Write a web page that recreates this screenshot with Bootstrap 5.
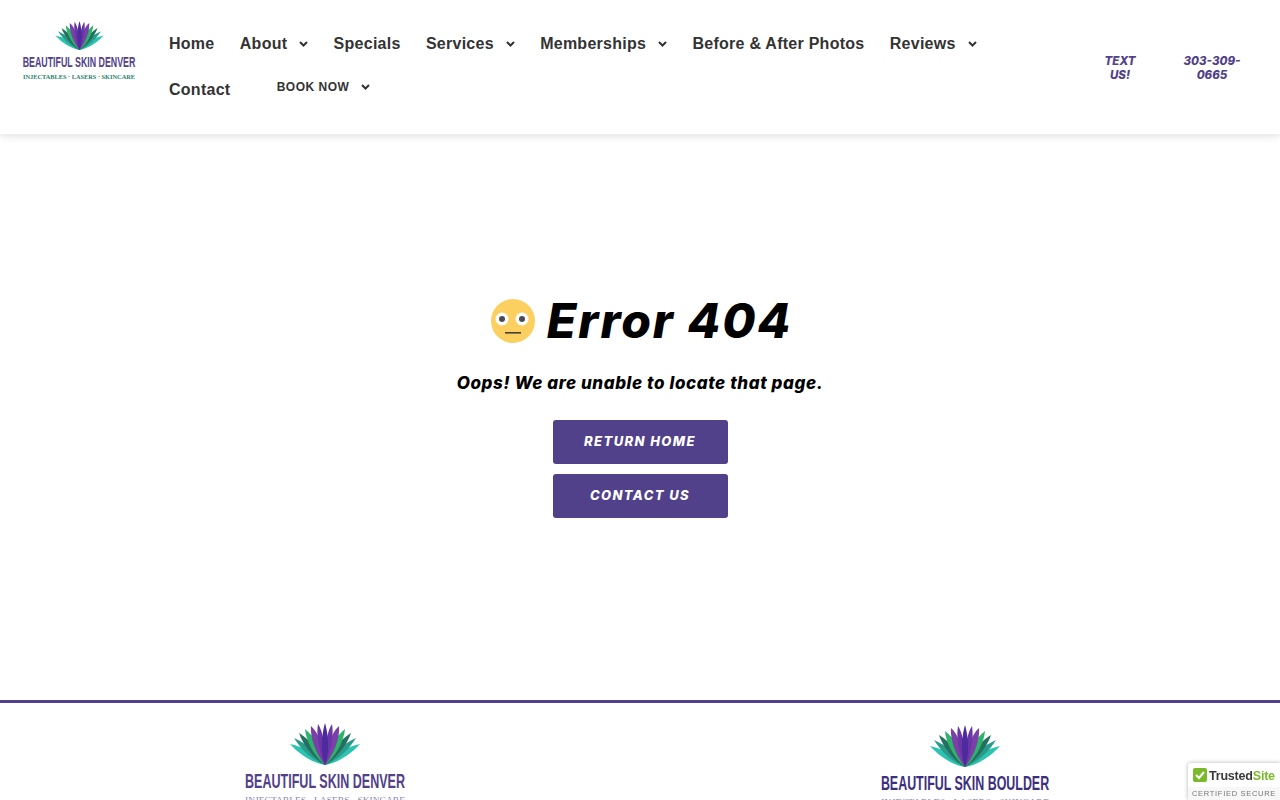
<!DOCTYPE html>
<html lang="en">
<head>
  <meta charset="UTF-8">
  <title>Page Not Found - Beautiful Skin Denver</title>
  <meta name="viewport" content="width=device-width, initial-scale=1">
  <link href="https://cdn.jsdelivr.net/npm/bootstrap@5.3.0/dist/css/bootstrap.min.css" rel="stylesheet">
  <style>
    body { font-family: "Liberation Sans", Arial, sans-serif; color: #000; background: #fff; }
    .site-head { height: 134px; padding: 0 0 0 22px; box-shadow: 0 2px 8px rgba(0,0,0,.13); position: relative; }
    .head-logo { width: 114px; height: 62px; margin-top: 20px; display: block; flex: none; }
    .menu-wrap { width: 830px; margin-left: 33px; padding-top: 21px; column-gap: 25.3px; }
    .menu-wrap a { font-size: 16px; font-weight: 700; color: #333; text-decoration: none; height: 46px; display: flex; align-items: center; letter-spacing: .26px; }
    .menu-wrap svg { margin-left: 12px; }
    .menu-wrap a.book-link { font-size: 12px; letter-spacing: .5px; margin-left: 21px; height: 40px; }
    .call-box { font-family: Inter, "Open Sans", sans-serif; font-style: italic; font-weight: 800; font-size: 11.5px; line-height: 14px; color: #51408a; text-align: center; text-decoration: none; }
    .call-row { position: absolute; top: 54px; left: 1095px; gap: 37px; }
    .call-text { width: 50px; }
    .call-phone { width: 60px; }
    .error-box { height: 566px; padding-top: 159px; }
    .error-title { font-family: Inter, "Open Sans", sans-serif; font-style: italic; font-weight: 800; font-size: 48px; line-height: 56px; margin: 0; padding-left: 3px; gap: 12px; letter-spacing: 1.9px; }
    .error-sub { font-family: Inter, "Open Sans", sans-serif; font-style: italic; font-weight: 800; font-size: 17px; line-height: 22px; margin: 23px 0 26px; letter-spacing: .6px; }
    .btn-purple { width: 175px; height: 44px; background: #51408a; color: #fff; border: 0; border-radius: 3px; font-family: Inter, "Open Sans", sans-serif; font-style: italic; font-weight: 800; font-size: 13px; letter-spacing: 1.4px; padding: 0; line-height: 43px; }
    .btn-purple:hover { background: #443475; color: #fff; }
    .btn-stack { gap: 10px; }
    .site-foot { border-top: 3px solid #51408a; height: 200px; overflow: hidden; }
    .foot-cell { padding-left: 10px; }
    .foot-logo { display: block; margin: 0 auto; }
    .trust-badge { position: fixed; right: 0; bottom: 0; width: 92px; height: 37px; background: #fff; box-shadow: 0 0 4px rgba(0,0,0,.3); border-radius: 3px 0 0 0; }
    .trust-top { height: 24px; padding: 5px 0 0 5px; gap: 2px; font-size: 12.5px; font-weight: 700; line-height: 15px; color: #3a3a3a; letter-spacing: -.2px; white-space: nowrap; }
    .trust-top > span { margin-top: 1px; }
    .trust-top span span { color: #7ab929; }
    .trust-bottom { height: 13px; background: #f7f7f7; font-size: 7.5px; line-height: 13px; letter-spacing: .7px; color: #777; text-align: center; white-space: nowrap; }
  </style>
</head>
<body>

<!-- Hoja del logo, se reutiliza en cabecera y pie -->
<svg width="0" height="0" class="position-absolute">
  <symbol id="agave" viewBox="0 0 70 42">
    <path fill="#2cc4b0" d="M35 42C22 40 9 31 0 21 14 24 28 31 35 42Z"/>
    <path fill="#2cc4b0" d="M35 42C48 40 61 31 70 21 56 24 42 31 35 42Z"/>
    <path fill="#2a9a8a" d="M35 42C24 38 11 27 4 15 17 21 29 30 35 42Z"/>
    <path fill="#2a9a8a" d="M35 42C46 38 59 27 66 15 53 21 41 30 35 42Z"/>
    <path fill="#236f60" d="M35 42C24 36 13 22 9 10 20 17 31 29 35 42Z"/>
    <path fill="#236f60" d="M35 42C46 36 57 22 61 10 50 17 39 29 35 42Z"/>
    <path fill="#2fb36b" d="M35 42C24 33 16 18 15 6 25 14 33 27 35 42Z"/>
    <path fill="#2fb36b" d="M35 42C46 33 54 18 55 6 45 14 37 27 35 42Z"/>
    <path fill="#7a3fa8" d="M35 42C26 31 20 15 21 3 29 10 35 27 35 42Z"/>
    <path fill="#7a3fa8" d="M35 42C44 31 50 15 49 3 41 10 35 27 35 42Z"/>
    <path fill="#6a35a5" d="M35 42C29 29 26 12 28 1 33 8 36 26 35 42Z"/>
    <path fill="#6a35a5" d="M35 42C41 29 44 12 42 1 37 8 34 26 35 42Z"/>
    <path fill="#4d2a9e" d="M35 42C30 28 32 10 35 0 38 10 40 28 35 42Z"/>
  </symbol>
</svg>

<header class="site-head d-flex align-items-start bg-white">
  <a href="#" class="head-logo">
    <svg width="114" height="62" viewBox="0 0 114 62" role="img" aria-label="Beautiful Skin Denver">
      <use href="#agave" x="33" y="1" width="49" height="29"/>
      <text transform="translate(57 47) scale(.589 1)" text-anchor="middle" font-family="Liberation Sans" font-weight="700" font-size="15" fill="#51408a">BEAUTIFUL SKIN DENVER</text>
      <text x="57" y="59" text-anchor="middle" textLength="112" lengthAdjust="spacingAndGlyphs" font-family="Liberation Serif" font-weight="700" font-size="6" fill="#1f7f6c">INJECTABLES · LASERS · SKINCARE</text>
    </svg>
  </a>

  <nav class="menu-wrap d-flex flex-wrap align-items-start">
    <a href="#">Home</a>
    <a href="#">About <svg width="9" height="6" viewBox="0 0 9 6"><path d="M1 1l3.5 3.5L8 1" fill="none" stroke="#333" stroke-width="2"/></svg></a>
    <a href="#">Specials</a>
    <a href="#">Services <svg width="9" height="6" viewBox="0 0 9 6"><path d="M1 1l3.5 3.5L8 1" fill="none" stroke="#333" stroke-width="2"/></svg></a>
    <a href="#">Memberships <svg width="9" height="6" viewBox="0 0 9 6"><path d="M1 1l3.5 3.5L8 1" fill="none" stroke="#333" stroke-width="2"/></svg></a>
    <a href="#">Before &amp; After Photos</a>
    <a href="#">Reviews <svg width="9" height="6" viewBox="0 0 9 6"><path d="M1 1l3.5 3.5L8 1" fill="none" stroke="#333" stroke-width="2"/></svg></a>
    <a href="#">Contact</a>
    <a href="#" class="book-link">BOOK NOW <svg width="9" height="6" viewBox="0 0 9 6"><path d="M1 1l3.5 3.5L8 1" fill="none" stroke="#333" stroke-width="2"/></svg></a>
  </nav>

  <div class="call-row d-flex">
    <a href="#" class="call-box call-text">TEXT US!</a>
    <a href="#" class="call-box call-phone">303-309-0665</a>
  </div>
</header>

<main class="error-box text-center">
  <h1 class="error-title d-flex justify-content-center align-items-center">
    <svg width="44" height="44" viewBox="0 0 44 44" aria-hidden="true">
      <circle cx="22" cy="22" r="22" fill="#fcd060"/>
      <circle cx="11" cy="20" r="6.5" fill="#fff"/>
      <circle cx="31" cy="20" r="6.5" fill="#fff"/>
      <circle cx="11" cy="20" r="3" fill="#4b4b55"/>
      <circle cx="31" cy="20" r="3" fill="#4b4b55"/>
      <rect x="14" y="33" width="16" height="1.6" fill="#4a3f35"/>
    </svg>
    <span>Error 404</span>
  </h1>
  <p class="error-sub">Oops! We are unable to locate that page.</p>
  <div class="btn-stack d-flex flex-column align-items-center">
    <a href="#" class="btn btn-purple">RETURN HOME</a>
    <a href="#" class="btn btn-purple">CONTACT US</a>
  </div>
</main>

<footer class="site-foot">
  <div class="row g-0">
    <div class="col-6 foot-cell">
      <svg class="foot-logo" width="170" height="110" viewBox="0 0 170 110" role="img" aria-label="Beautiful Skin Denver">
        <use href="#agave" x="50" y="20" width="70" height="42"/>
        <text transform="translate(85 85) scale(.597 1)" text-anchor="middle" font-family="Liberation Sans" font-weight="700" font-size="21" fill="#51408a">BEAUTIFUL SKIN DENVER</text>
        <text x="85" y="100" text-anchor="middle" textLength="160" lengthAdjust="spacingAndGlyphs" font-family="Liberation Serif" font-size="9" fill="#8a84b0">INJECTABLES · LASERS · SKINCARE</text>
      </svg>
    </div>
    <div class="col-6 foot-cell">
      <svg class="foot-logo" width="172" height="110" viewBox="0 0 172 110" role="img" aria-label="Beautiful Skin Boulder">
        <use href="#agave" x="51" y="22" width="70" height="42"/>
        <text transform="translate(86 87) scale(.592 1)" text-anchor="middle" font-family="Liberation Sans" font-weight="700" font-size="21" fill="#3d2f80">BEAUTIFUL SKIN BOULDER</text>
        <text x="86" y="102" text-anchor="middle" textLength="168" lengthAdjust="spacingAndGlyphs" font-family="Liberation Serif" font-size="9" fill="#8a84b0">INJECTABLES · LASERS · SKINCARE</text>
      </svg>
    </div>
  </div>
</footer>

<!-- Sello fijo abajo a la derecha -->
<div class="trust-badge">
  <div class="trust-top d-flex align-items-start">
    <svg width="14" height="14" viewBox="0 0 14 14"><rect width="14" height="14" rx="2" fill="#7ab929"/><path d="M3 7l3 3 5-6" fill="none" stroke="#fff" stroke-width="2"/></svg>
    <span>Trusted<span>Site</span></span>
  </div>
  <div class="trust-bottom">CERTIFIED SECURE</div>
</div>

<script src="https://cdn.jsdelivr.net/npm/bootstrap@5.3.0/dist/js/bootstrap.bundle.min.js"></script>
</body>
</html>
